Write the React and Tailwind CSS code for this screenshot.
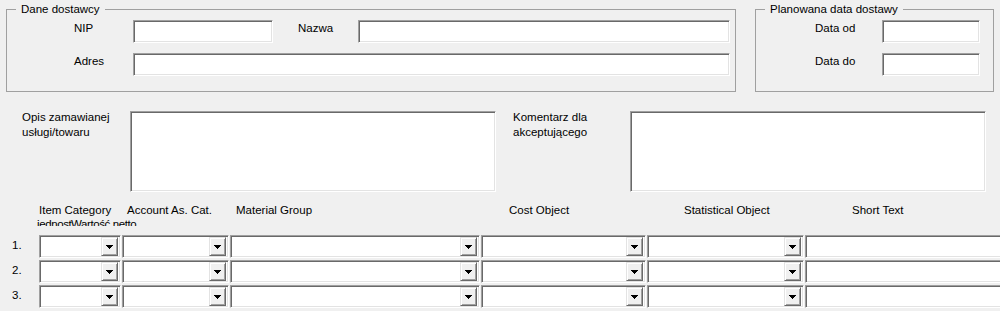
import React from "react";

const sunken =
  "bg-white border border-t-[#a0a0a0] border-l-[#a0a0a0] border-r-white border-b-white shadow-[inset_1px_1px_0_#696969,inset_-1px_-1px_0_#e3e3e3]";
const raised =
  "bg-[#f0f0f0] border border-t-[#e3e3e3] border-l-[#e3e3e3] border-r-[#696969] border-b-[#696969] shadow-[inset_1px_1px_0_#ffffff,inset_-1px_-1px_0_#a0a0a0]";

function Arrow() {
  return (
    <svg width="7" height="4" viewBox="0 0 7 4" shapeRendering="crispEdges" className="mt-px">
      <path d="M0 0h7v1h-1v1h-1v1h-1v1h-1v-1h-1v-1h-1v-1h-1z" fill="#000" />
    </svg>
  );
}

function Combo({ w }) {
  return (
    <div className={`${sunken} ${w} shrink-0 h-[23px] flex justify-end items-stretch py-px pr-[2px]`}>
      <div className={`${raised} w-[17px] shrink-0 flex items-center justify-center`}>
        <Arrow />
      </div>
    </div>
  );
}

function Text({ w }) {
  return <div className={`${sunken} ${w} shrink-0 h-[23px]`} />;
}

export default function App() {
  const rows = ["1.", "2.", "3."];
  return (
    <div className="w-[1000px] h-[311px] overflow-hidden bg-[#f0f0f0] text-black text-[11.5px] leading-[14px] font-['Liberation_Sans',Arial,sans-serif]">
      {/* Section 1: frames */}
      <div className="flex pl-[6px] pt-[2px]">
        <fieldset className="border border-[#a0a0a0] w-[730px] shrink-0 pb-[15px]">
          <legend className="ml-[9px] px-[5px] leading-[14px]">Dane dostawcy</legend>
          <div className="flex flex-col gap-[10px] pl-[67px] pr-[5px] pt-[4px]">
            <div className="flex items-start">
              <div className="w-[59px] shrink-0 pt-[1px]">NIP</div>
              <Text w="w-[140px]" />
              <div className="ml-[25px] w-[60px] shrink-0 pt-[1px]">Nazwa</div>
              <Text w="w-[372px]" />
            </div>
            <div className="flex items-start">
              <div className="w-[59px] shrink-0 pt-[1px]">Adres</div>
              <Text w="w-[597px]" />
            </div>
          </div>
        </fieldset>
        <fieldset className="border border-[#a0a0a0] ml-[19px] w-[239px] shrink-0 pb-[15px]">
          <legend className="ml-[9px] px-[5px] leading-[14px]">Planowana data dostawy</legend>
          <div className="flex flex-col gap-[10px] pl-[59px] pr-[13px] pt-[4px]">
            <div className="flex items-start">
              <div className="w-[67px] shrink-0 pt-[1px]">Data od</div>
              <Text w="w-[98px]" />
            </div>
            <div className="flex items-start">
              <div className="w-[67px] shrink-0 pt-[1px]">Data do</div>
              <Text w="w-[98px]" />
            </div>
          </div>
        </fieldset>
      </div>

      {/* Section 2: text areas */}
      <div className="flex items-start pl-[22px] mt-[19px]">
        <div className="w-[108px] shrink-0 leading-[15px] -mt-px">
          Opis zamawianej
          <br />
          usługi/towaru
        </div>
        <div className={`${sunken} w-[366px] shrink-0 h-[81px]`} />
        <div className="ml-[17px] w-[117px] shrink-0 leading-[15px] -mt-px">
          Komentarz dla
          <br />
          akceptującego
        </div>
        <div className={`${sunken} w-[356px] shrink-0 h-[81px]`} />
      </div>

      {/* Section 3: headers */}
      <div className="flex h-[23px] overflow-hidden mt-[11px] pl-[39px] gap-px">
        <div className="w-[82px] shrink-0 whitespace-nowrap">
          <div>Item Category</div>
          <div className="flex -ml-[2px] tracking-[-0.4px]">
            <span className="w-[34px] shrink-0">jednost.</span>
            <span>Wartość netto</span>
          </div>
        </div>
        <div className="w-[107px] shrink-0 pl-[5px] whitespace-nowrap">Account As. Cat.</div>
        <div className="w-[250px] shrink-0 pl-[6px] whitespace-nowrap">Material Group</div>
        <div className="w-[165px] shrink-0 pl-[28px] whitespace-nowrap">Cost Object</div>
        <div className="w-[157px] shrink-0 pl-[37px] whitespace-nowrap">Statistical Object</div>
        <div className="w-[195px] shrink-0 pl-[47px] whitespace-nowrap">Short Text</div>
      </div>

      {/* Rows */}
      <div className="flex flex-col gap-[2px] mt-[9px]">
        {rows.map((r) => (
          <div key={r} className="flex items-start">
            <div className="w-[39px] shrink-0 pl-[12px] pt-[3px]">{r}</div>
            <div className="flex gap-px shrink-0">
              <Combo w="w-[82px]" />
              <Combo w="w-[107px]" />
              <Combo w="w-[250px]" />
              <Combo w="w-[165px]" />
              <Combo w="w-[157px]" />
              <Text w="w-[200px]" />
            </div>
          </div>
        ))}
      </div>
    </div>
  );
}
